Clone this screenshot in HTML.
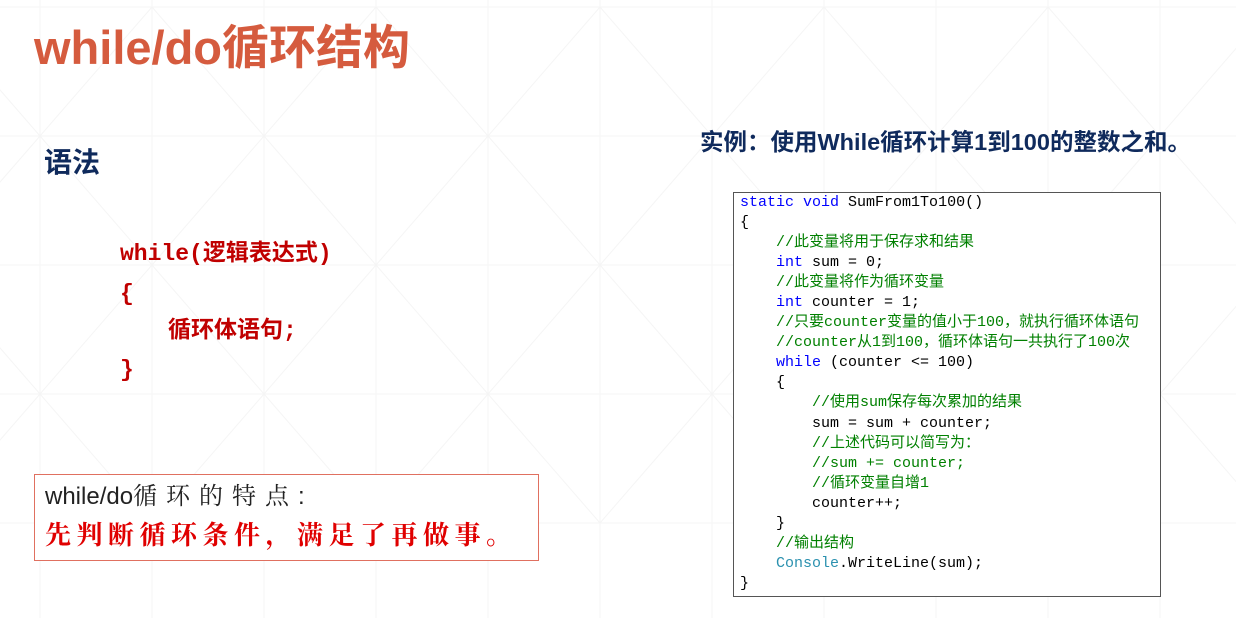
<!DOCTYPE html>
<html><head><meta charset="utf-8"><style>
body{margin:0;width:1236px;height:618px;overflow:hidden;background:#fff;position:relative;font-family:"Liberation Sans","Noto Sans CJK SC",sans-serif}
.a{position:absolute;white-space:nowrap}
.t{left:34px;top:18px;font-size:47px;font-weight:bold;color:#d55b3e;line-height:60px}
.s{left:44px;top:143px;font-size:28px;font-weight:bold;color:#0f2a5c;line-height:40px}
.syn{font-family:"Liberation Mono","Noto Sans CJK SC",monospace;font-weight:bold;color:#c00000;font-size:23px;line-height:30px}
.ex{left:700px;top:127px;font-size:23.5px;font-weight:bold;color:#0f2a5c;line-height:30px}
.code{left:733px;top:192px;width:428px;height:405px;border:1px solid #555;background:#fff;box-sizing:border-box;padding:0 0 0 6px;font-family:"Liberation Mono","Noto Sans CJK SC",monospace;font-size:15px;line-height:20.05px;white-space:pre;color:#000}
.k{color:#0000ff}.c{color:#008000}.ty{color:#2b91af}
.box{left:34px;top:474px;width:505px;height:87px;border:1.5px solid #e07060;box-sizing:border-box;background:#fff}
</style></head><body>
<svg class="a" style="left:0;top:0" width="1236" height="618">
<g stroke="#f5f5f5" stroke-width="1" fill="none">
<path d="M0 7H1236M0 136H1236M0 265H1236M0 394H1236M0 523H1236"/>
<path d="M40 0V618M152 0V618M264 0V618M376 0V618M488 0V618M600 0V618M712 0V618M824 0V618M936 0V618M1048 0V618M1160 0V618"/>
<path d="M-72 7L40 136L152 7L264 136L376 7L488 136L600 7L712 136L824 7L936 136L1048 7L1160 136L1272 7"/>
<path d="M-72 265L40 136L152 265L264 136L376 265L488 136L600 265L712 136L824 265L936 136L1048 265L1160 136L1272 265"/>
<path d="M-72 265L40 394L152 265L264 394L376 265L488 394L600 265L712 394L824 265L936 394L1048 265L1160 394L1272 265"/>
<path d="M-72 523L40 394L152 523L264 394L376 523L488 394L600 523L712 394L824 523L936 394L1048 523L1160 394L1272 523"/>
</g></svg>
<div class="a t">while/do循环结构</div>
<div class="a s">语法</div>
<div class="a syn" style="left:120px;top:239px">while(逻辑表达式)</div>
<div class="a syn" style="left:120px;top:279px">{</div>
<div class="a syn" style="left:168px;top:316px">循环体语句;</div>
<div class="a syn" style="left:120px;top:355px">}</div>
<div class="a ex">实例：使用While循环计算1到100的整数之和。</div>
<div class="a code"><span class="k">static</span> <span class="k">void</span> SumFrom1To100()
{
    <span class="c">//此变量将用于保存求和结果</span>
    <span class="k">int</span> sum = 0;
    <span class="c">//此变量将作为循环变量</span>
    <span class="k">int</span> counter = 1;
    <span class="c">//只要counter变量的值小于100，就执行循环体语句</span>
    <span class="c">//counter从1到100，循环体语句一共执行了100次</span>
    <span class="k">while</span> (counter &lt;= 100)
    {
        <span class="c">//使用sum保存每次累加的结果</span>
        sum = sum + counter;
        <span class="c">//上述代码可以简写为：</span>
        <span class="c">//sum += counter;</span>
        <span class="c">//循环变量自增1</span>
        counter++;
    }
    <span class="c">//输出结构</span>
    <span class="ty">Console</span>.WriteLine(sum);
}</div>
<div class="a box">
<div class="a" style="left:10px;top:6px;font-size:24px;line-height:32px;color:#222;font-family:'Liberation Sans','Noto Serif CJK SC',sans-serif">while/do<span style="letter-spacing:9px">循环的特点:</span></div>
<div class="a" style="left:10px;top:44px;font-size:26px;line-height:34px;color:#e00000;font-weight:bold;letter-spacing:5.5px;font-family:'Liberation Serif','Noto Serif CJK SC',serif">先判断循环条件，满足了再做事。</div>
</div>
</body></html>
